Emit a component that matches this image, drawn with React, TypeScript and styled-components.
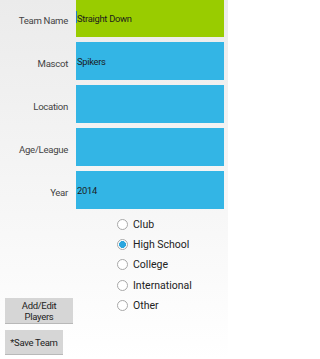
import styled, { createGlobalStyle } from 'styled-components';

const GlobalStyle = createGlobalStyle`
  html, body {
    margin: 0;
    padding: 0;
    background: #ffffff;
  }
  body {
    font-family: Roboto, 'Liberation Sans', sans-serif;
  }
`;

interface Field {
  label: string;
  value: string;
  active?: boolean;
}

const fields: Field[] = [
  { label: 'Team Name', value: 'Straight Down', active: true },
  { label: 'Mascot', value: 'Spikers' },
  { label: 'Location', value: '' },
  { label: 'Age/League', value: '' },
  { label: 'Year', value: '2014' },
];

const levels = ['Club', 'High School', 'College', 'International', 'Other'];

export default function App() {
  const selected = 'High School';

  return (
    <Screen>
      <GlobalStyle />
      <Form>
        {fields.map((field) => (
          <Row key={field.label}>
            <Label>{field.label}</Label>
            <Input active={field.active}>
              {field.active && <Caret />}
              {field.value}
            </Input>
          </Row>
        ))}
      </Form>
      <Bottom>
        <Buttons>
          <Button wide>
            Add/Edit
            <br />
            Players
          </Button>
          <Button>*Save Team</Button>
        </Buttons>
        <RadioList>
          {levels.map((level) => (
            <RadioRow key={level}>
              <RadioCircle checked={level === selected} />
              <RadioText>{level}</RadioText>
            </RadioRow>
          ))}
        </RadioList>
      </Bottom>
    </Screen>
  );
}

const Screen = styled.div`
  width: 228px;
  height: 359px;
  overflow: hidden;
  display: flex;
  flex-direction: column;
  background: linear-gradient(#ebebeb, #ffffff);
`;

const Form = styled.div`
  display: flex;
  flex-direction: column;
  gap: 5px;
  margin-top: -1px;
`;

const Row = styled.div`
  display: grid;
  grid-template-columns: 76px 148px;
  height: 38px;
`;

const Label = styled.div`
  display: flex;
  align-items: center;
  justify-content: flex-end;
  padding: 5px 8px 0 0;
  font-size: 9.6px;
  letter-spacing: -0.3px;
  color: #444;
`;

const Input = styled.div<{ active?: boolean }>`
  position: relative;
  display: flex;
  align-items: center;
  padding-left: 1px;
  font-size: 9.4px;
  letter-spacing: -0.3px;
  color: #1c1c1c;
  background: ${({ active }) => (active ? '#99cc00' : '#33b5e5')};
`;

const Caret = styled.span`
  position: absolute;
  left: 0;
  top: 12px;
  width: 1px;
  height: 12px;
  background: #1f7fc4;
`;

const Bottom = styled.div`
  flex: 1;
  display: flex;
  padding: 0 0 4px 5px;
`;

const Buttons = styled.div`
  width: 112px;
  display: flex;
  flex-direction: column;
  justify-content: flex-end;
  align-items: flex-start;
  gap: 6px;
`;

const Button = styled.div<{ wide?: boolean }>`
  width: ${({ wide }) => (wide ? '68px' : '58px')};
  padding: ${({ wide }) => (wide ? '2px 0 1px' : '7px 0 6px')};
  box-sizing: border-box;
  text-align: center;
  font-size: 9.5px;
  letter-spacing: -0.3px;
  line-height: 11px;
  color: #222;
  background: #d6d6d6;
  border-bottom: 1px solid #b8b8b8;
`;

const RadioList = styled.div`
  display: flex;
  flex-direction: column;
  padding-top: 5px;
`;

const RadioRow = styled.div`
  display: flex;
  align-items: center;
  height: 20.4px;
  gap: 5px;
`;

const RadioCircle = styled.span<{ checked?: boolean }>`
  width: 11px;
  height: 11px;
  box-sizing: border-box;
  border-radius: 50%;
  border: 1px solid #a8a8a8;
  background: ${({ checked }) =>
    checked ? 'radial-gradient(circle, #2ba6de 0 3.2px, #ffffff 3.7px)' : '#ffffff'};
`;

const RadioText = styled.span`
  font-size: 10.5px;
  color: #222;
`;
